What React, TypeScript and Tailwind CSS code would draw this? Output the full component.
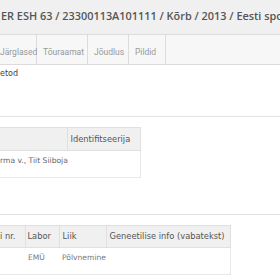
import React from "react";

const tabs = [
  { label: "Järglased", w: "w-[37px]", pl: "pl-0" },
  { label: "Tõuraamat", w: "w-[51px]", pl: "pl-[6px]" },
  { label: "Jõudlus", w: "w-[41px]", pl: "pl-[6px]" },
  { label: "Pildid", w: "w-[37px]", pl: "pl-[6px]" },
];

export default function App() {
  return (
    <div className="w-[280px] h-[280px] overflow-hidden bg-white font-['DejaVu_Sans',sans-serif]">
      {/* Pealkiri */}
      <div className="h-[34px] bg-[#f0f0f0] pl-[1px] pt-[9px] overflow-hidden">
        <h1 className="whitespace-nowrap font-['Open_Sans',sans-serif] font-semibold text-[10.9px] leading-[14px] text-[#555]">
          ER ESH 63 / 23300113A101111 / Kõrb / 2013 / Eesti spo
        </h1>
      </div>

      {/* Sakid */}
      <div className="h-[31px] flex border-y border-[#dcdcdc] bg-[#f7f7f7]">
        {tabs.map((t) => (
          <div
            key={t.label}
            className={`${t.w} ${t.pl} shrink-0 border-r border-[#dcdcdc] flex items-center pt-[6px] font-['Roboto',sans-serif] text-[8.5px] text-[#999] whitespace-nowrap`}
          >
            {t.label}
          </div>
        ))}
      </div>

      {/* Sisu */}
      <div className="pt-[4px] text-[8px] leading-[10px] text-[#444]">etod</div>

      <div className="mt-[37px] border-t border-[#e2e2e2]" />

      <table className="mt-[10px] w-[141px] border-collapse text-[8.3px] whitespace-nowrap">
        <thead>
          <tr className="h-[23px] bg-[#f0f0f0] text-[#555]">
            <th className="w-[67px] border border-l-0 border-[#e0e0e0] font-normal" />
            <th className="border border-[#e0e0e0] text-left font-normal pl-[3px]">Identifitseerija</th>
          </tr>
        </thead>
        <tbody>
          <tr className="h-[27px] align-top">
            <td colSpan={2} className="border border-l-0 border-[#e8e8e8] pt-[4px] text-[#666] text-[7.6px]">
              rma v., Tiit Siiboja
            </td>
          </tr>
        </tbody>
      </table>

      <div className="mt-[36px] border-t border-[#e2e2e2]" />

      <table className="mt-[10px] w-[231px] border-collapse text-[8.3px] whitespace-nowrap">
        <thead>
          <tr className="h-[22px] bg-[#f0f0f0] text-[#555]">
            <th className="w-[25px] border border-l-0 border-[#e0e0e0] text-left font-normal">i nr.</th>
            <th className="w-[34px] border border-[#e0e0e0] text-left font-normal pl-[2px]">Labor</th>
            <th className="w-[46px] border border-[#e0e0e0] text-left font-normal pl-[3px]">Liik</th>
            <th className="border border-[#e0e0e0] text-left font-normal pl-[3px]">Geneetilise info (vabatekst)</th>
          </tr>
        </thead>
        <tbody>
          <tr className="h-[27px] align-top text-[#777] text-[7.6px]">
            <td className="border-b border-[#e8e8e8]" />
            <td className="border-b border-[#e8e8e8] pl-[3px] pt-[4px]">EMÜ</td>
            <td className="border-b border-[#e8e8e8] pl-[3px] pt-[4px]">Põlvnemine</td>
            <td className="border-b border-r border-[#e8e8e8]" />
          </tr>
        </tbody>
      </table>
    </div>
  );
}
